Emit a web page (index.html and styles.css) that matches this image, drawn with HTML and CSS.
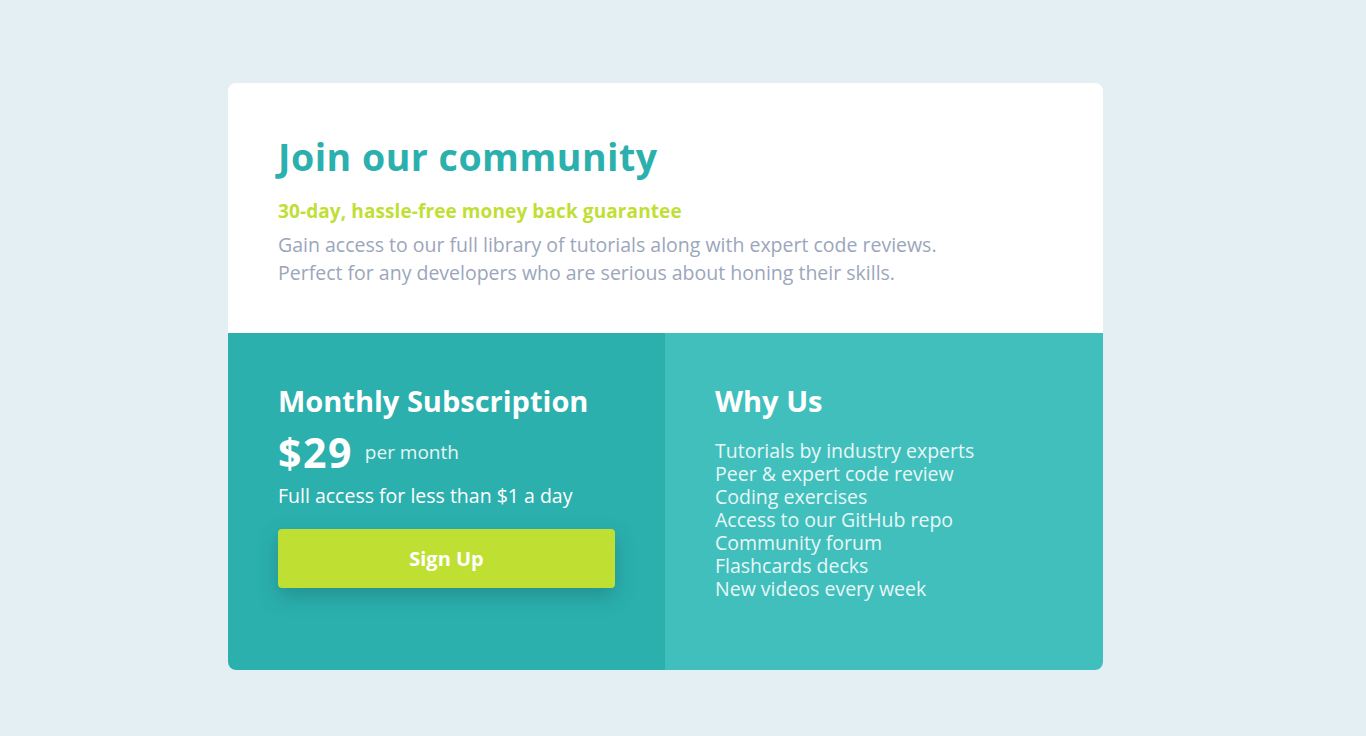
FILE: index.html
```html
<!DOCTYPE html>
<html lang="en">
<head>
<meta charset="utf-8">
<title>Single price grid</title>
<link rel="stylesheet" href="styles.css">
</head>
<body>
<main class="card">
  <section class="intro">
    <h1 class="intro-title">Join our community</h1>
    <p class="intro-tagline">30-day, hassle-free money back guarantee</p>
    <p class="intro-text">Gain access to our full library of tutorials along with expert code reviews.<br>Perfect for any developers who are serious about honing their skills.</p>
  </section>
  <div class="bottom">
    <section class="plan">
      <h2 class="panel-title">Monthly Subscription</h2>
      <div class="price"><span class="price-amount">$29</span><span class="price-period">per month</span></div>
      <p class="plan-note">Full access for less than $1 a day</p>
      <button class="signup" type="button">Sign Up</button>
    </section>
    <section class="why">
      <h2 class="panel-title">Why Us</h2>
      <ul class="why-list">
        <li>Tutorials by industry experts</li>
        <li>Peer &amp; expert code review</li>
        <li>Coding exercises</li>
        <li>Access to our GitHub repo</li>
        <li>Community forum</li>
        <li>Flashcards decks</li>
        <li>New videos every week</li>
      </ul>
    </section>
  </div>
</main>
</body>
</html>
```
FILE: styles.css
```css
* { box-sizing: border-box; }
html, body { margin: 0; padding: 0; }
body {
  background: #e4eff4;
  font-family: "Open Sans", "Liberation Sans", sans-serif;
  min-height: 736px;
}
.card {
  width: 875px;
  margin: 83px 0 0 228px;
  border-radius: 8px;
  overflow: hidden;
  background: #fff;
}
.intro {
  height: 250px;
  padding: 50px 50px 0;
}
.intro-title {
  margin: 0;
  font-size: 37.5px;
  line-height: 48px;
  font-weight: 700;
  color: #2bb0ae;
  letter-spacing: 0.5px;
}
.intro-tagline {
  margin: 16px 0 0;
  font-size: 19px;
  line-height: 28px;
  font-weight: 700;
  color: #bfdf35;
  letter-spacing: 0.1px;
}
.intro-text {
  margin: 6px 0 0;
  font-size: 19.5px;
  line-height: 28px;
  color: #9ba6bc;
}
.bottom {
  display: grid;
  grid-template-columns: 437px 438px;
  height: 337px;
}
.plan {
  background: #2bb0ae;
  padding: 48px 50px 0;
  color: #fff;
}
.why {
  background: #40bfbd;
  padding: 48px 50px 0;
  color: #fff;
}
.panel-title {
  margin: 0;
  font-size: 29px;
  line-height: 40px;
  font-weight: 700;
}
.price {
  display: flex;
  align-items: center;
  gap: 12px;
  margin-top: 7px;
}
.price-amount {
  font-size: 41px;
  line-height: 48px;
  font-weight: 700;
  letter-spacing: 1.5px;
}
.price-period {
  font-size: 19px;
  color: #e6f6f5;
}
.plan-note {
  margin: 7px 0 0;
  font-size: 19.5px;
  line-height: 26px;
}
.signup {
  display: block;
  width: 100%;
  height: 59px;
  margin-top: 20px;
  border: 0;
  border-radius: 4px;
  background: #bfe032;
  color: #fff;
  font-family: inherit;
  font-size: 20px;
  font-weight: 700;
  box-shadow: 0 8px 20px rgba(20, 90, 90, 0.35);
}
.why-list {
  list-style: none;
  margin: 18px 0 0;
  padding: 0;
  font-size: 19.5px;
  line-height: 23px;
  color: #e8f7f6;
}
```
